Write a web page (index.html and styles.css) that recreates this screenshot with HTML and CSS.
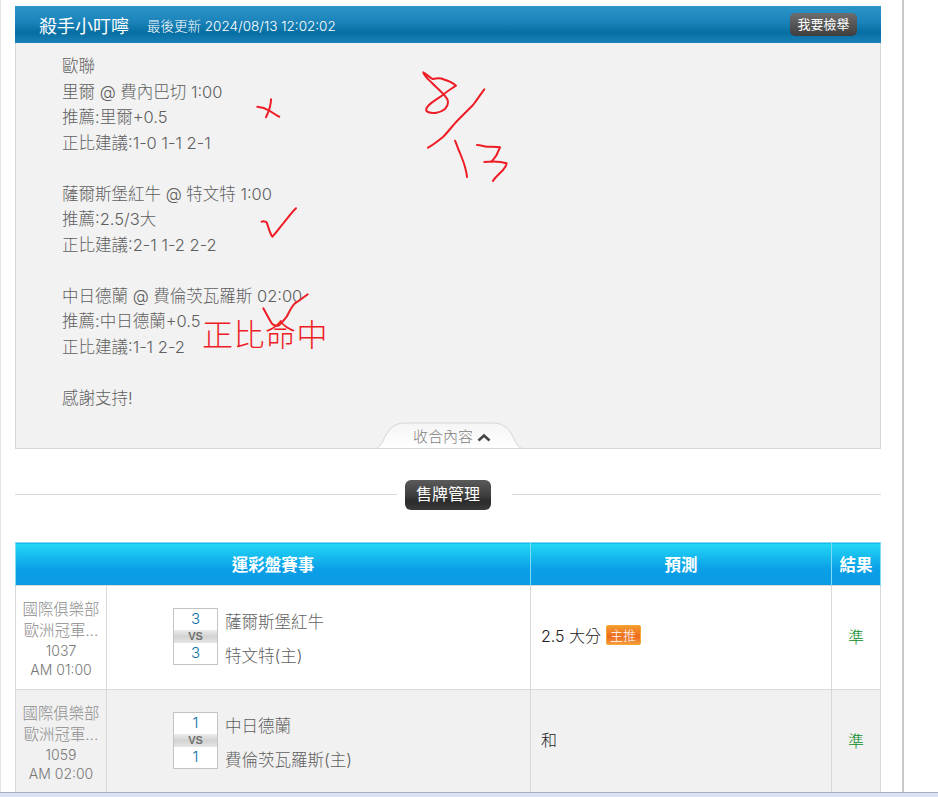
FILE: index.html
```html
<!DOCTYPE html>
<html>
    <head>
        <meta charset="utf-8">
        <link rel="stylesheet" href="styles.css">
    </head>
    <body>
        <div class="page">
            <section class="article">
                <div class="article-head">
                    <span class="author">殺手小叮嚀</span>
                    <span class="updated">最後更新 2024/08/13 12:02:02</span>
                    <a class="report-btn">我要檢舉</a>
                </div>
                <div class="article-body">
                    <p>歐聯<br>里爾 @ 費內巴切 1:00<br>推薦:里爾+0.5<br>正比建議:1-0 1-1 2-1</p>
                    <p>薩爾斯堡紅牛 @ 特文特 1:00<br>推薦:2.5/3大<br>正比建議:2-1 1-2 2-2</p>
                    <p>中日德蘭 @ 費倫茨瓦羅斯 02:00<br>推薦:中日德蘭+0.5<br>正比建議:1-1 2-2</p>
                    <p>感謝支持!</p>
                </div>
                <div class="collapse-tab">
                    <svg class="collapse-shape" width="148" height="27" viewBox="0 0 148 27">
                        <defs>
                            <linearGradient id="tabfill" x1="0" y1="0" x2="0" y2="1">
                                <stop offset="0" stop-color="#f5f5f5"/>
                                <stop offset="1" stop-color="#ffffff"/>
                            </linearGradient>
                        </defs>
                        <path d="M0 26.500C4 26 6 23 8 19C13 8 18 1 30 1H118C130 1 135 8 140 19C142 23 144 26 148 26.500Z" fill="url(#tabfill)" stroke="#d6d6d6"/>
                    </svg>
                    <span class="collapse-label">收合內容
                        <svg width="14" height="9" viewBox="0 0 14 9"><path d="M1.500 7.500L7 2.500L12.500 7.500" fill="none" stroke="#444" stroke-width="2.6"/></svg>
                    </span>
                </div>
            </section>

            <div class="divider">
                <span class="divider-title">售牌管理</span>
            </div>

            <table class="games">
                <colgroup>
                    <col class="col-league">
                    <col>
                    <col class="col-pick">
                    <col class="col-result">
                </colgroup>
                <thead>
                    <tr>
                        <th colspan="2">運彩盤賽事</th>
                        <th>預測</th>
                        <th>結果</th>
                    </tr>
                </thead>
                <tbody>
                    <tr>
                        <td class="league">國際俱樂部<br>歐洲冠軍...<span class="time">1037<br>AM 01:00</span></td>
                        <td class="match">
                            <div class="match-row">
                                <div class="score">
                                    <div class="num">3</div>
                                    <div class="vs">VS</div>
                                    <div class="num">3</div>
                                </div>
                                <div class="teams">
                                    <div>薩爾斯堡紅牛</div>
                                    <div>特文特(主)</div>
                                </div>
                            </div>
                        </td>
                        <td class="pick">2.5 大分 <span class="badge">主推</span></td>
                        <td class="result">準</td>
                    </tr>
                    <tr class="alt">
                        <td class="league">國際俱樂部<br>歐洲冠軍...<span class="time">1059<br>AM 02:00</span></td>
                        <td class="match">
                            <div class="match-row">
                                <div class="score">
                                    <div class="num">1</div>
                                    <div class="vs">VS</div>
                                    <div class="num">1</div>
                                </div>
                                <div class="teams">
                                    <div>中日德蘭</div>
                                    <div>費倫茨瓦羅斯(主)</div>
                                </div>
                            </div>
                        </td>
                        <td class="pick">和</td>
                        <td class="result">準</td>
                    </tr>
                </tbody>
            </table>

            <!-- red pen marks drawn over the screenshot -->
            <svg class="pen-marks" width="938" height="797" viewBox="0 0 938 797">
                <g fill="none" stroke="#ee1c25" stroke-width="2" stroke-linecap="round" stroke-linejoin="round">
                    <path d="M257.300 106.700C262 107 266 108.500 270 111C273 113 276 115.500 279.300 116.700"/>
                    <path d="M271 99.300C271 104 269 111 266 117.300"/>
                    <path d="M423.300 72.300C427 74 431 79 433 79C437 78 441 78 444 79.500C449 81 453 83 456 85.700C451 89 446 92 443 95C437 99 432 102 429 105C426 108 425 111 428 112C433 114 440 113 445 109C449 105 449 100 445 96C441 91 436 87 432 83C428 79 424 76 423.300 72.300Z"/>
                    <path d="M484.300 89.300C480 95 477 100 473 105C468 110 463 115 458 120C453 125 448 132 443 137C438 141 433 145 428 147.700"/>
                    <path d="M455 140.700C457 145 458 149 460 153C462 158 464 163 465 167C466 171 467 174 467 177"/>
                    <path d="M477 145C481 145 484 146.500 487 146.700C491 147 496 146.500 500 147.300C498 153 495 158 491.700 161.700"/>
                    <path d="M484.300 162C490 161.500 501 161.500 506.700 163.300C506 167 505 168 503 170C501 172 499 174 498 175C496 177 494 179 493 181"/>
                    <path d="M261.700 221.700C263 221 266 221.500 266.700 222.300C268 226 270 234 272.300 236.700C276 233 280 227 283.300 223.300C287 219 292 212 296 208.300"/>
                    <path d="M263.300 308.300C266 313 269 319 271.700 323.300C273 325 276 326 278.300 325.700C281 324 284 320 286.700 316.700C289 312 292 306 295 303.300C299 301 304 297 307.700 294.300"/>
                </g>
            </svg>
            <span class="pen-text">正比命中</span>
        </div>
        <div class="bottom-bar"></div>
    </body>
</html>
```

FILE: styles.css
```css
html, body{
    margin: 0;
    padding: 0;
    height: 100%;
    overflow: hidden;
    background-color: #fff;
}

body{
    font-family: Inter, "Noto Sans CJK TC", sans-serif;
    font-weight: 300;
    color: #5f5f5f;
}

.page{
    position: relative;
    box-sizing: border-box;
    width: 904px;
    height: 797px;
    padding: 6px 21px 0 14px;
    border-right: 2px solid #c8c8c8;
    border-left: 1px solid #e4e4e4;
}

.article{
    position: relative;
    border: 1px solid #d8d8d8;
    border-top: none;
    background-color: #f2f2f2;
}

.article-head{
    display: flex;
    align-items: center;
    height: 37px;
    padding: 0 24px 0 24px;
    margin: 0 -1px;
    color: #fff;
    background: linear-gradient(#2b95ca 0%, #1a82b8 45%, #056ea2 72%, #1c82ba 100%);
}

.author{
    font-size: 18px;
    font-weight: 400;
}

.updated{
    margin-left: 18px;
    font-size: 13.5px;
}

.report-btn{
    margin-left: auto;
    padding: 0 7.5px;
    height: 23px;
    line-height: 23px;
    font-size: 13px;
    font-weight: 400;
    border-radius: 5px;
    background: linear-gradient(#6d6d6d, #3e3e3e);
}

.article-body{
    height: 394px;
    padding: 11px 46px 0;
    font-size: 16.5px;
    line-height: 25.5px;
}

.article-body p{
    margin: 0 0 25.5px;
}

.collapse-tab{
    position: absolute;
    left: 359px;
    bottom: -1px;
    width: 148px;
    height: 27px;
}

.collapse-shape{
    display: block;
}

.collapse-label{
    position: absolute;
    left: 38px;
    top: 3px;
    font-size: 15px;
    color: #808080;
    white-space: nowrap;
}

.divider{
    display: flex;
    align-items: center;
    margin-top: 30px;
    height: 32px;
}

.divider::before, .divider::after{
    content: "";
    height: 1px;
    margin-bottom: 1px;
    background-color: #d9d9d9;
}

.divider::before{
    width: 382px;
    margin-right: 8px;
}

.divider::after{
    flex: 1;
    margin-left: 21px;
}

.divider-title{
    padding: 0 11px;
    height: 30px;
    line-height: 29px;
    font-size: 16px;
    font-weight: 400;
    color: #fff;
    border-radius: 6px;
    background: linear-gradient(#5a5a5a 0%, #3c3c3c 55%, #2b2b2b 70%, #3a3a3a 100%);
}

.games{
    width: 866px;
    margin-top: 31px;
    border-collapse: collapse;
    table-layout: fixed;
}

.col-league{
    width: 91px;
}

.col-pick{
    width: 301px;
}

.col-result{
    width: 49px;
}

.games th{
    height: 42px;
    padding: 0;
    font-size: 16.5px;
    font-weight: 700;
    color: #fff;
    border-left: 1px solid #7fdcf5;
    border-right: 1px solid #7fdcf5;
    border-top: 1px solid #7fdcf5;
    background: linear-gradient(#22d8f6 0%, #0a9ee6 62%, #0a9ce5 100%);
}

.games td{
    box-sizing: border-box;
    height: 104px;
    padding: 0;
    border: 1px solid #d9d9d9;
    vertical-align: middle;
}

.games tr.alt td{
    background-color: #f1f1f1;
}

.games td.league{
    padding-top: 2px;
    text-align: center;
    font-size: 15.4px;
    line-height: 21px;
    color: #8c8c8c;
}

.time{
    display: block;
    font-size: 14px;
    line-height: 19px;
    color: #777;
}

.match-row{
    display: flex;
    align-items: center;
    padding: 0 0 2px 66px;
}

.score{
    width: 45px;
    box-sizing: border-box;
    border: 1px solid #c4c4c4;
    background-color: #fff;
    text-align: center;
}

.num{
    height: 21px;
    line-height: 20px;
    font-size: 15px;
    color: #0b70a8;
}

.vs{
    height: 13px;
    line-height: 13px;
    font-family: "Liberation Sans", sans-serif;
    font-size: 11px;
    font-weight: 700;
    color: #707070;
    background: linear-gradient(#ececec, #d2d2d2 50%, #e6e6e6);
}

.teams{
    margin: 4px 0 0 7px;
    font-size: 16.5px;
    line-height: 34px;
    color: #5f5f5f;
}

.games td.pick{
    padding: 0 0 6px 10px;
    font-size: 16px;
    color: #222;
}

.badge{
    display: inline-block;
    box-sizing: border-box;
    vertical-align: 2px;
    width: 35px;
    height: 20px;
    line-height: 18px;
    border-radius: 2px;
    text-align: center;
    font-size: 13px;
    color: #fff;
    border: 1px solid #f7a630;
    background: linear-gradient(#f39a2e, #ee6a1f 60%, #f59a3a);
}

.games td.result{
    padding-bottom: 4px;
    text-align: center;
    font-size: 16px;
    color: #0a8a1e;
}

.pen-marks{
    position: absolute;
    left: -1px;
    top: 0;
    pointer-events: none;
}

.pen-text{
    position: absolute;
    left: 201px;
    top: 313px;
    font-size: 31px;
    letter-spacing: 0.5px;
    line-height: 44px;
    font-weight: 300;
    color: #ee1c25;
    white-space: nowrap;
}

.bottom-bar{
    position: fixed;
    left: 0;
    right: 0;
    bottom: 0;
    height: 4px;
    border-top: 1px solid #aab0c4;
    background-color: #d9e3f4;
}
```
